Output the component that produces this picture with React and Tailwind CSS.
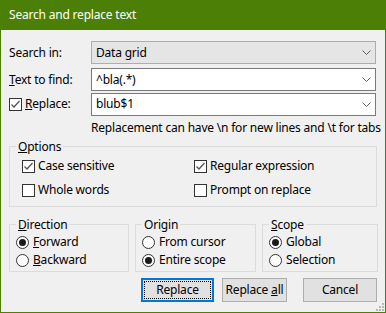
import React from "react";

function Chevron() {
  return (
    <svg width="9" height="5" viewBox="0 0 9 5" className="shrink-0">
      <path d="M0.5 0.5 L4.5 4.5 L8.5 0.5" fill="none" stroke="#606060" strokeWidth="1" />
    </svg>
  );
}

function Check({ checked }) {
  return (
    <span className="w-[13px] h-[13px] border border-[#333333] bg-white flex items-center justify-center shrink-0">
      {checked && (
        <svg width="11" height="11" viewBox="0 0 11 11">
          <path d="M1.5 5.5 L4 8 L9.5 2" fill="none" stroke="#555555" strokeWidth="1.3" />
        </svg>
      )}
    </span>
  );
}

function Radio({ checked }) {
  return (
    <span className="w-[13px] h-[13px] rounded-full border border-[#333333] bg-white flex items-center justify-center shrink-0">
      {checked && <span className="w-[7px] h-[7px] rounded-full bg-[#1a1a1a]" />}
    </span>
  );
}

function Combo({ value, gray }) {
  return (
    <div
      className={
        "w-[285px] h-[23px] flex items-center justify-between pl-[4px] pr-[4px] border " +
        (gray ? "bg-[#e5e5e5] border-[#adadad]" : "bg-white border-[#7a7a7a]")
      }
    >
      <span>{value}</span>
      <Chevron />
    </div>
  );
}

function Group({ title, className, inner, children }) {
  return (
    <fieldset className={"border border-[#dcdcdc] " + className}>
      <legend className="ml-[6px] px-[2px] leading-[15px]">{title}</legend>
      <div className={inner}>{children}</div>
    </fieldset>
  );
}

function CheckItem({ checked, children }) {
  return (
    <div className="flex items-center gap-[3px]">
      <Check checked={checked} />
      <span>{children}</span>
    </div>
  );
}

function RadioItem({ checked, children }) {
  return (
    <div className="flex items-center gap-[4px] h-[18px]">
      <Radio checked={checked} />
      <span>{children}</span>
    </div>
  );
}

export default function App() {
  return (
    <div
      className="w-[386px] h-[313px] flex flex-col border-x border-b border-[#4b7f06] text-[12px] text-black leading-[16px] tracking-[-0.2px]"
      style={{ fontFamily: '"Noto Sans", "Liberation Sans", sans-serif' }}
    >
      {/* Title bar */}
      <div className="h-[30px] bg-[#4b7f06] text-white flex items-center pl-[8px] shrink-0">
        Search and replace text
      </div>

      <div className="flex-1 bg-[#f0f0f0] pl-[8px] pt-[11px] relative">
        <div className="flex items-center h-[23px]">
          <span className="w-[82px]">Search in:</span>
          <Combo value="Data grid" gray />
        </div>
        <div className="flex items-center h-[23px] mt-[4px]">
          <span className="w-[82px]">
            <u>T</u>ext to find:
          </span>
          <Combo value="^bla(.*)" />
        </div>
        <div className="flex items-center h-[22px] mt-[2px]">
          <div className="w-[82px] flex items-center gap-[3px]">
            <Check checked />
            <span>
              <u>R</u>eplace:
            </span>
          </div>
          <Combo value="blub$1" />
        </div>
        <div className="pl-[82px] mt-[5px] whitespace-nowrap">
          Replacement can have \n for new lines and \t for tabs
        </div>

        <Group
          title={<><u>O</u>ptions</>}
          className="w-[368px] h-[68px] mt-[3px]"
          inner="grid grid-cols-[172px_1fr] gap-y-[8px] pl-[12px] pt-[4px]"
        >
          <CheckItem checked>Case sensitive</CheckItem>
          <CheckItem checked>Regular expression</CheckItem>
          <CheckItem>Whole words</CheckItem>
          <CheckItem>Prompt on replace</CheckItem>
        </Group>

        <div className="flex gap-[6px] mt-[10px]">
          <Group title={<><u>D</u>irection</>} className="w-[120px] h-[55px]" inner="pl-[6px] pt-[1px]">
            <RadioItem checked>
              <u>F</u>orward
            </RadioItem>
            <RadioItem>
              <u>B</u>ackward
            </RadioItem>
          </Group>
          <Group title={<>Ori<u>g</u>in</>} className="w-[121px] h-[55px]" inner="pl-[6px] pt-[1px]">
            <RadioItem>From cursor</RadioItem>
            <RadioItem checked>Entire scope</RadioItem>
          </Group>
          <Group title={<><u>S</u>cope</>} className="w-[116px] h-[55px]" inner="pl-[6px] pt-[1px]">
            <RadioItem checked>Global</RadioItem>
            <RadioItem>Selection</RadioItem>
          </Group>
        </div>

        <div className="flex mt-[6px] ml-[132px]">
          <button className="w-[73px] h-[24px] border-2 border-[#0078d7] bg-[#e1e1e1] p-[1px]">
            <span className="w-full h-full flex items-center justify-center border border-dotted border-black">
              Replace
            </span>
          </button>
          <button className="w-[65px] h-[24px] ml-[8px] border border-[#adadad] bg-[#e1e1e1]">
            Replace <u>a</u>ll
          </button>
          <button className="w-[74px] h-[24px] ml-[16px] border border-[#adadad] bg-[#e1e1e1]">
            Cancel
          </button>
        </div>

        {/* Resize grip */}
        <svg width="8" height="8" viewBox="0 0 8 8" className="absolute right-[1px] bottom-[1px]">
          {[
            [6, 0],
            [6, 3],
            [3, 3],
            [6, 6],
            [3, 6],
            [0, 6],
          ].map(([x, y], i) => (
            <rect key={i} x={x} y={y} width="2" height="2" fill="#b8b8b8" />
          ))}
        </svg>
      </div>
    </div>
  );
}
